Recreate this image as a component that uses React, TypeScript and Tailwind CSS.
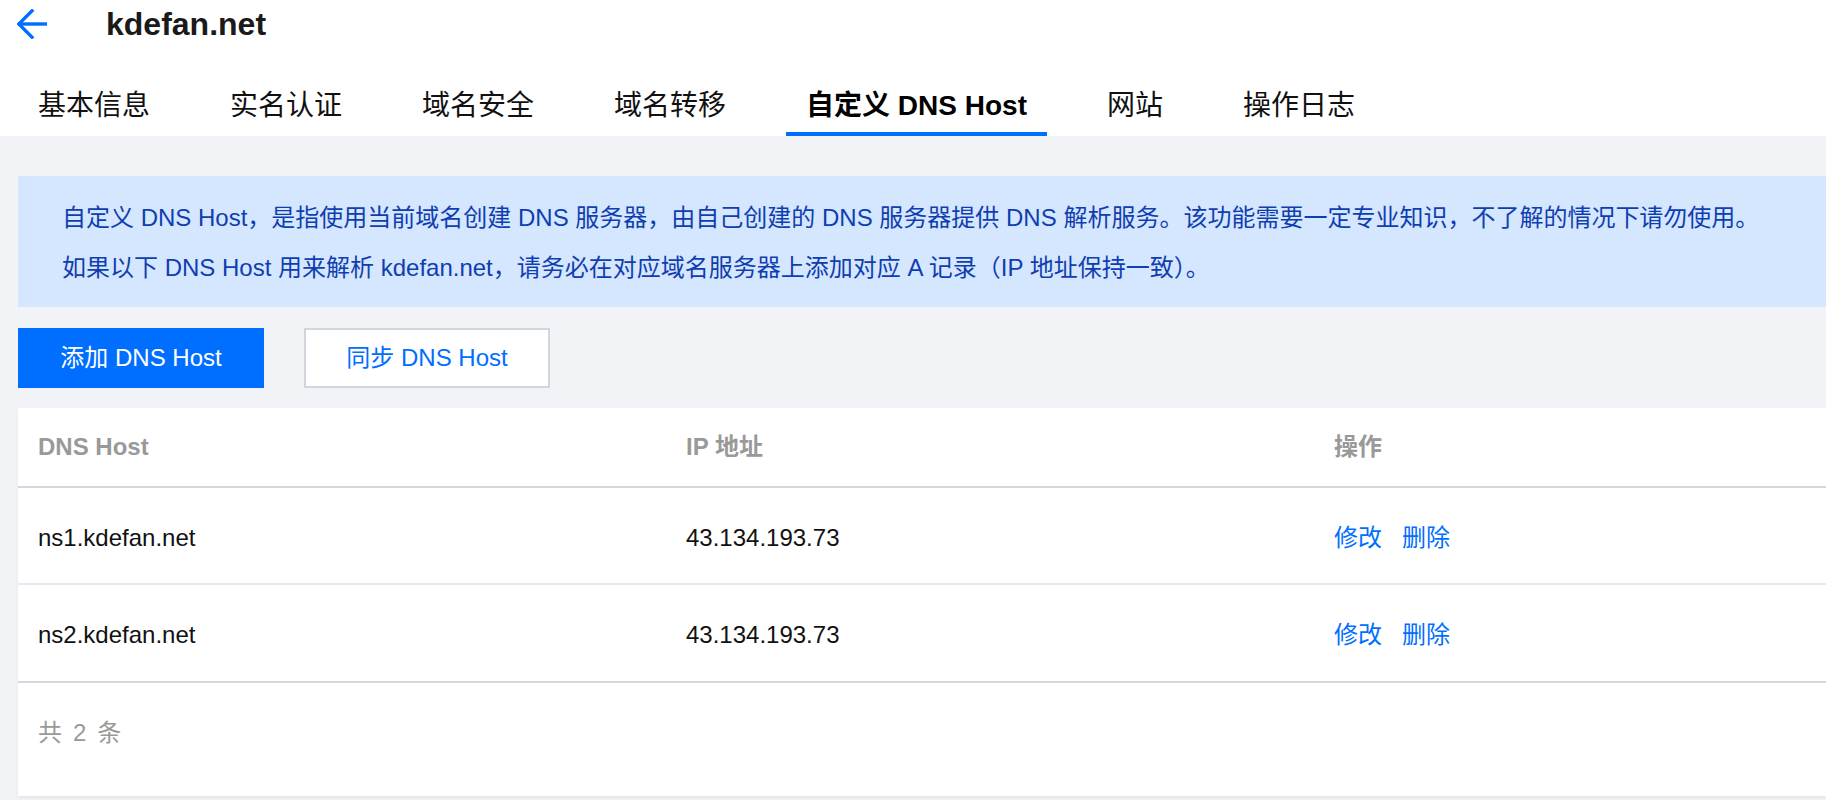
import React from "react";

const FONT = '"Liberation Sans", "Noto Sans CJK SC", Arial, sans-serif';

const tabs = ["基本信息", "实名认证", "域名安全", "域名转移", "自定义 DNS Host", "网站", "操作日志"];

const rows = [
  { host: "ns1.kdefan.net", ip: "43.134.193.73" },
  { host: "ns2.kdefan.net", ip: "43.134.193.73" },
];

export default function App() {
  return (
    <div className="w-full h-screen overflow-hidden bg-white text-[#000]" style={{ fontFamily: FONT }}>
      {/* Header */}
      <div className="flex items-center h-[48px] pl-[17px]">
        <svg width="30" height="30" viewBox="0 0 30 30" fill="none" stroke="#006eff" strokeWidth="3.4" strokeLinecap="square">
          <path d="M15 1.8 L1.8 15 L15 28.2" strokeLinejoin="miter" />
          <path d="M2.5 15 H28.5" />
        </svg>
        <div className="ml-[59px] text-[32px] leading-none font-bold text-[#1a1a1a]">kdefan.net</div>
      </div>

      {/* Tabs */}
      <div className="flex items-end h-[88px] pl-[18px] gap-[40px]">
        {tabs.map((t, i) => {
          const active = i === 4;
          return (
            <div
              key={t}
              className={
                active
                  ? "px-[20px] pb-[6px] border-b-4 border-[#006eff] text-[28px] leading-[40px] font-bold text-black"
                  : "px-[20px] pb-[6px] border-b-4 border-transparent text-[28px] leading-[40px] text-[#111]"
              }
            >
              {t}
            </div>
          );
        })}
      </div>

      {/* Content */}
      <div className="bg-[#f2f3f7] h-full pl-[18px] pt-[40px]">
        <div className="bg-[#d5e6ff] pl-[44px] pt-[17px] pb-[14px] text-[24px] leading-[50px] text-[#0f3eb0]">
          <p>
            自定义 DNS Host，是指使用当前域名创建 DNS 服务器，由自己创建的 DNS 服务器提供 DNS 解析服务。该功能需要一定专业知识，不了解的情况下请勿使用。
          </p>
          <p>如果以下 DNS Host 用来解析 kdefan.net，请务必在对应域名服务器上添加对应 A 记录（IP 地址保持一致）。</p>
        </div>

        <div className="flex gap-[40px] mt-[21px]">
          <button className="w-[246px] h-[60px] bg-[#006eff] text-white text-[24px] flex items-center justify-center">
            添加 DNS Host
          </button>
          <button className="w-[246px] h-[60px] bg-white border-2 border-[#d0d5de] text-[#006eff] text-[24px] flex items-center justify-center">
            同步 DNS Host
          </button>
        </div>

        <div className="mt-[20px] bg-white shadow-[0_2px_3px_rgba(0,0,0,0.06)]">
          <div className="grid grid-cols-[648px_648px_1fr] h-[80px] border-b-2 border-[#d3d7e0] items-center text-[24px] font-bold text-[#999]">
            <div className="pl-[20px]">DNS Host</div>
            <div className="pl-[20px]">IP 地址</div>
            <div className="pl-[20px]">操作</div>
          </div>
          {rows.map((r, i) => (
            <div
              key={r.host}
              className={
                i === rows.length - 1
                  ? "grid grid-cols-[648px_648px_1fr] h-[98px] pt-[4px] border-b-2 border-[#d3d7e0] items-center text-[24px]"
                  : "grid grid-cols-[648px_648px_1fr] h-[97px] pt-[4px] border-b-2 border-[#e6e9ef] items-center text-[24px]"
              }
            >
              <div className="pl-[20px] text-[#111]">{r.host}</div>
              <div className="pl-[20px] text-[#111]">{r.ip}</div>
              <div className="pl-[20px] flex gap-[20px] text-[#006eff]">
                <span>修改</span>
                <span>删除</span>
              </div>
            </div>
          ))}
          <div className="h-[113px] pt-[30px] pl-[20px] text-[24px] leading-[40px] text-[#999]">
            共<span className="mx-[11px]">2</span>条
          </div>
        </div>
      </div>
    </div>
  );
}
